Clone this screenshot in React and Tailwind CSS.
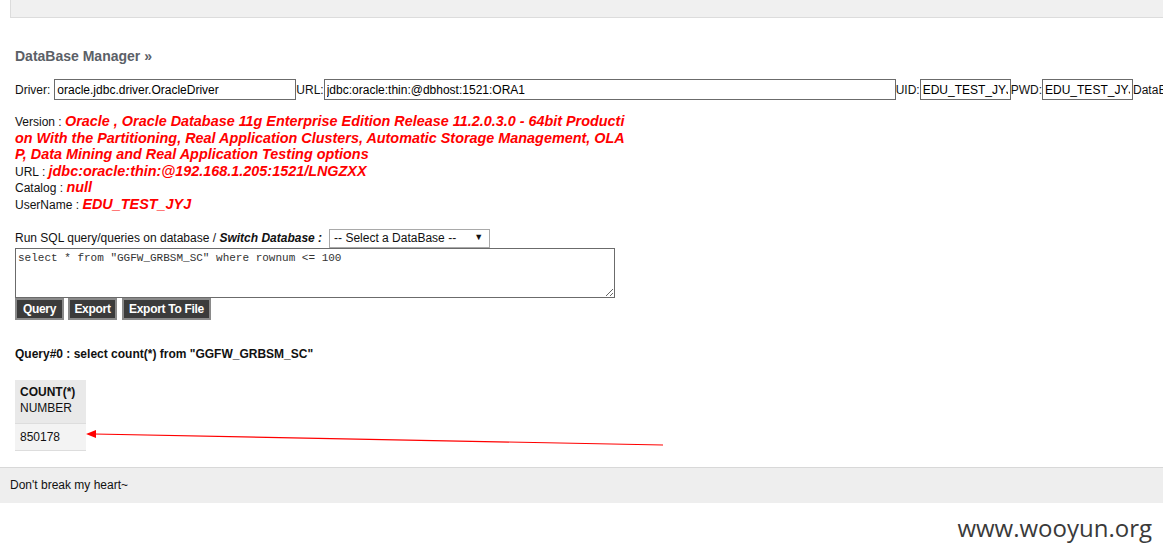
import React from "react";

const Field = ({ label, value, width }) => (
    <>
        <span>{label}</span>
        <input
            readOnly
            value={value}
            className="h-[21px] shrink-0 border border-[#6b6b6b] bg-white px-[2px] text-[12px] text-black outline-none"
            style={{ width }}
        />
    </>
);

const InfoLine = ({ label, children }) => (
    <div className="text-[14.4px] leading-[16.6px]">
        <span className="text-[12px] leading-none text-[#111]">{label} : </span>
        <span className="font-bold italic text-[#ff0000]">{children}</span>
    </div>
);

const App = () => {
    return (
        <div className="relative h-[557px] w-[1163px] overflow-hidden bg-white font-['Liberation_Sans',Arial,sans-serif] text-[12px] text-[#111]">
            {/* top bar */}
            <div className="ml-[10px] h-[18px] border-b border-l border-[#dcdcdc] bg-[#f0f0f0]"></div>

            <div className="pl-[15px]">
                <h2 className="mt-[30px] text-[14px] font-bold leading-[17px] text-[#5b6067]">
                    DataBase Manager »
                </h2>

                {/* connection row */}
                <div className="mt-[14px] flex items-center whitespace-nowrap">
                    <span className="mr-[4px]">Driver:</span>
                    <Field label="" value="oracle.jdbc.driver.OracleDriver" width={242} />
                    <Field label="URL:" value="jdbc:oracle:thin:@dbhost:1521:ORA1" width={572} />
                    <Field label="UID:" value="EDU_TEST_JYJ" width={91} />
                    <Field label="PWD:" value="EDU_TEST_JYJ" width={91} />
                    <span>DataBase</span>
                </div>

                {/* version info */}
                <div className="mt-[13px] w-[613px] break-all">
                    <InfoLine label="Version">
                        Oracle , Oracle Database 11g Enterprise Edition Release
                        11.2.0.3.0 - 64bit Production With the Partitioning,
                        Real Application Clusters, Automatic Storage Management,
                        OLAP, Data Mining and Real Application Testing options
                    </InfoLine>
                    <InfoLine label="URL">
                        jdbc:oracle:thin:@192.168.1.205:1521/LNGZXX
                    </InfoLine>
                    <InfoLine label="Catalog">null</InfoLine>
                    <InfoLine label="UserName">EDU_TEST_JYJ</InfoLine>
                </div>

                {/* sql form */}
                <div className="mt-[16px] flex items-center">
                    <span>
                        Run SQL query/queries on database /{" "}
                        <b className="italic">Switch Database :</b>
                    </span>
                    <div className="ml-[7px] flex h-[19px] w-[161px] items-center justify-between border border-[#a9a9a9] bg-white pl-[4px] pr-[6px]">
                        <span>-- Select a DataBase --</span>
                        <span className="text-[9px]">▼</span>
                    </div>
                </div>
                <textarea
                    readOnly
                    value={`select * from "GGFW_GRBSM_SC" where rownum <= 100`}
                    className="block h-[50px] w-[600px] border border-[#6b6b6b] px-[2px] py-[1px] font-['Liberation_Mono',monospace] text-[11px] text-[#333] outline-none"
                />
                <div className="flex">
                    <button className="h-[22px] w-[49px] border-2 border-[#8a8a8a] bg-[#3b3b3b] text-[12px] font-bold tracking-[-0.3px] text-white">
                        Query
                    </button>
                    <button className="ml-[4px] h-[22px] w-[49px] border-2 border-[#8a8a8a] bg-[#3b3b3b] text-[12px] font-bold tracking-[-0.3px] text-white">
                        Export
                    </button>
                    <button className="ml-[5px] h-[22px] w-[89px] border-2 border-[#8a8a8a] bg-[#3b3b3b] text-[12px] font-bold tracking-[-0.3px] text-white">
                        Export To File
                    </button>
                </div>

                <p className="mt-[27px] font-bold leading-[14px]">
                    Query#0 : select count(*) from "GGFW_GRBSM_SC"
                </p>

                {/* result table */}
                <table className="mt-[19px] border-collapse">
                    <thead>
                        <tr>
                            <th className="w-[71px] bg-[#e9e9e9] px-[5px] pt-[4px] pb-[7px] text-left font-normal leading-[16px]">
                                <b>COUNT(*)</b>
                                <br />
                                NUMBER
                            </th>
                        </tr>
                    </thead>
                    <tbody>
                        <tr>
                            <td className="h-[27px] border-t border-b border-[#dddddd] bg-[#f3f3f3] px-[5px]">
                                850178
                            </td>
                        </tr>
                    </tbody>
                </table>
            </div>

            {/* footer */}
            <div className="mt-[16px] flex h-[36px] items-center border-t border-[#d8d8d8] bg-[#eeeeee] pl-[10px]">
                Don't break my heart~
            </div>

            <div className="mt-[10px] pr-[11px] text-right font-['Open_Sans',sans-serif] text-[24px] leading-[30px] text-[#3a3a3a]">
                www.wooyun.org
            </div>

            {/* annotation arrow */}
            <svg
                className="absolute left-0 top-0"
                width="1163"
                height="557"
                viewBox="0 0 1163 557"
            >
                <line x1="663" y1="445" x2="94" y2="434" stroke="#ff0000" strokeWidth="1.2" />
                <polygon points="86,434 96,430 96,438" fill="#ff0000" />
            </svg>
        </div>
    );
};

export default App;
